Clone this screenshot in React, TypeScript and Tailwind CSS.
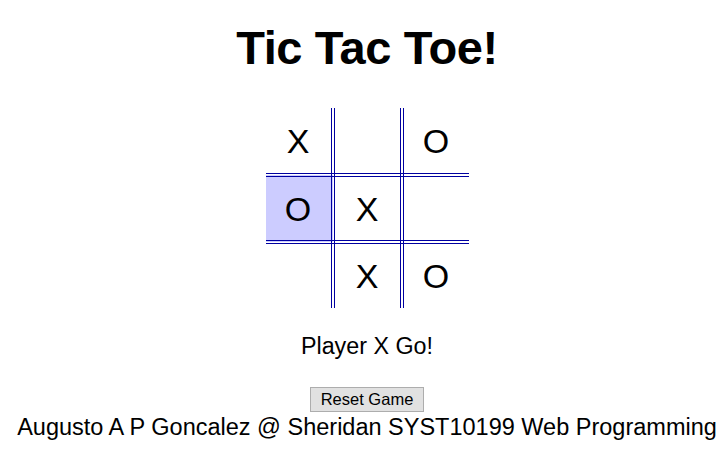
import React from 'react'

const board = [
  ['X', '', 'O'],
  ['O', 'X', ''],
  ['', 'X', 'O'],
]

const colWidths = ['w-[67px]', 'w-[69px]', 'w-[67px]']
const rowHeights = ['h-[67px]', 'h-[67px]', 'h-[66px]']

export default function App() {
  return (
    <div className="flex min-h-[458px] flex-col items-center bg-white pl-[10px] font-['Liberation_Sans',Arial,sans-serif] text-black">
      <h1 className="mt-[21px] text-[47px] font-bold leading-[54px] tracking-[-0.4px]">
        Tic Tac Toe!
      </h1>

      {/* Board */}
      <table className="mt-[33px] border-collapse">
        <tbody>
          {board.map((row, r) => (
            <tr key={r}>
              {row.map((cell, c) => (
                <td
                  key={c}
                  className={[
                    colWidths[c],
                    rowHeights[r],
                    'border-double border-[#0000a0] p-0 text-center align-middle text-[34px] leading-none',
                    c < 2 ? 'border-r-4' : '',
                    r < 2 ? 'border-b-4' : '',
                    r === 1 && c === 0 ? 'bg-[#ccccff]' : '',
                  ].join(' ')}
                >
                  {cell}
                </td>
              ))}
            </tr>
          ))}
        </tbody>
      </table>

      <p className="mt-[25px] text-[23.3px] leading-[27px]">Player X Go!</p>

      <button className="mt-[27px] h-[25px] w-[114px] border border-[#adadad] bg-[#e1e1e1] text-[16.5px] leading-none">
        Reset Game
      </button>

      <p className="mt-[2px] whitespace-nowrap text-[23.5px] leading-[27px]">
        Augusto A P Goncalez @ Sheridan SYST10199 Web Programming
      </p>
    </div>
  )
}
